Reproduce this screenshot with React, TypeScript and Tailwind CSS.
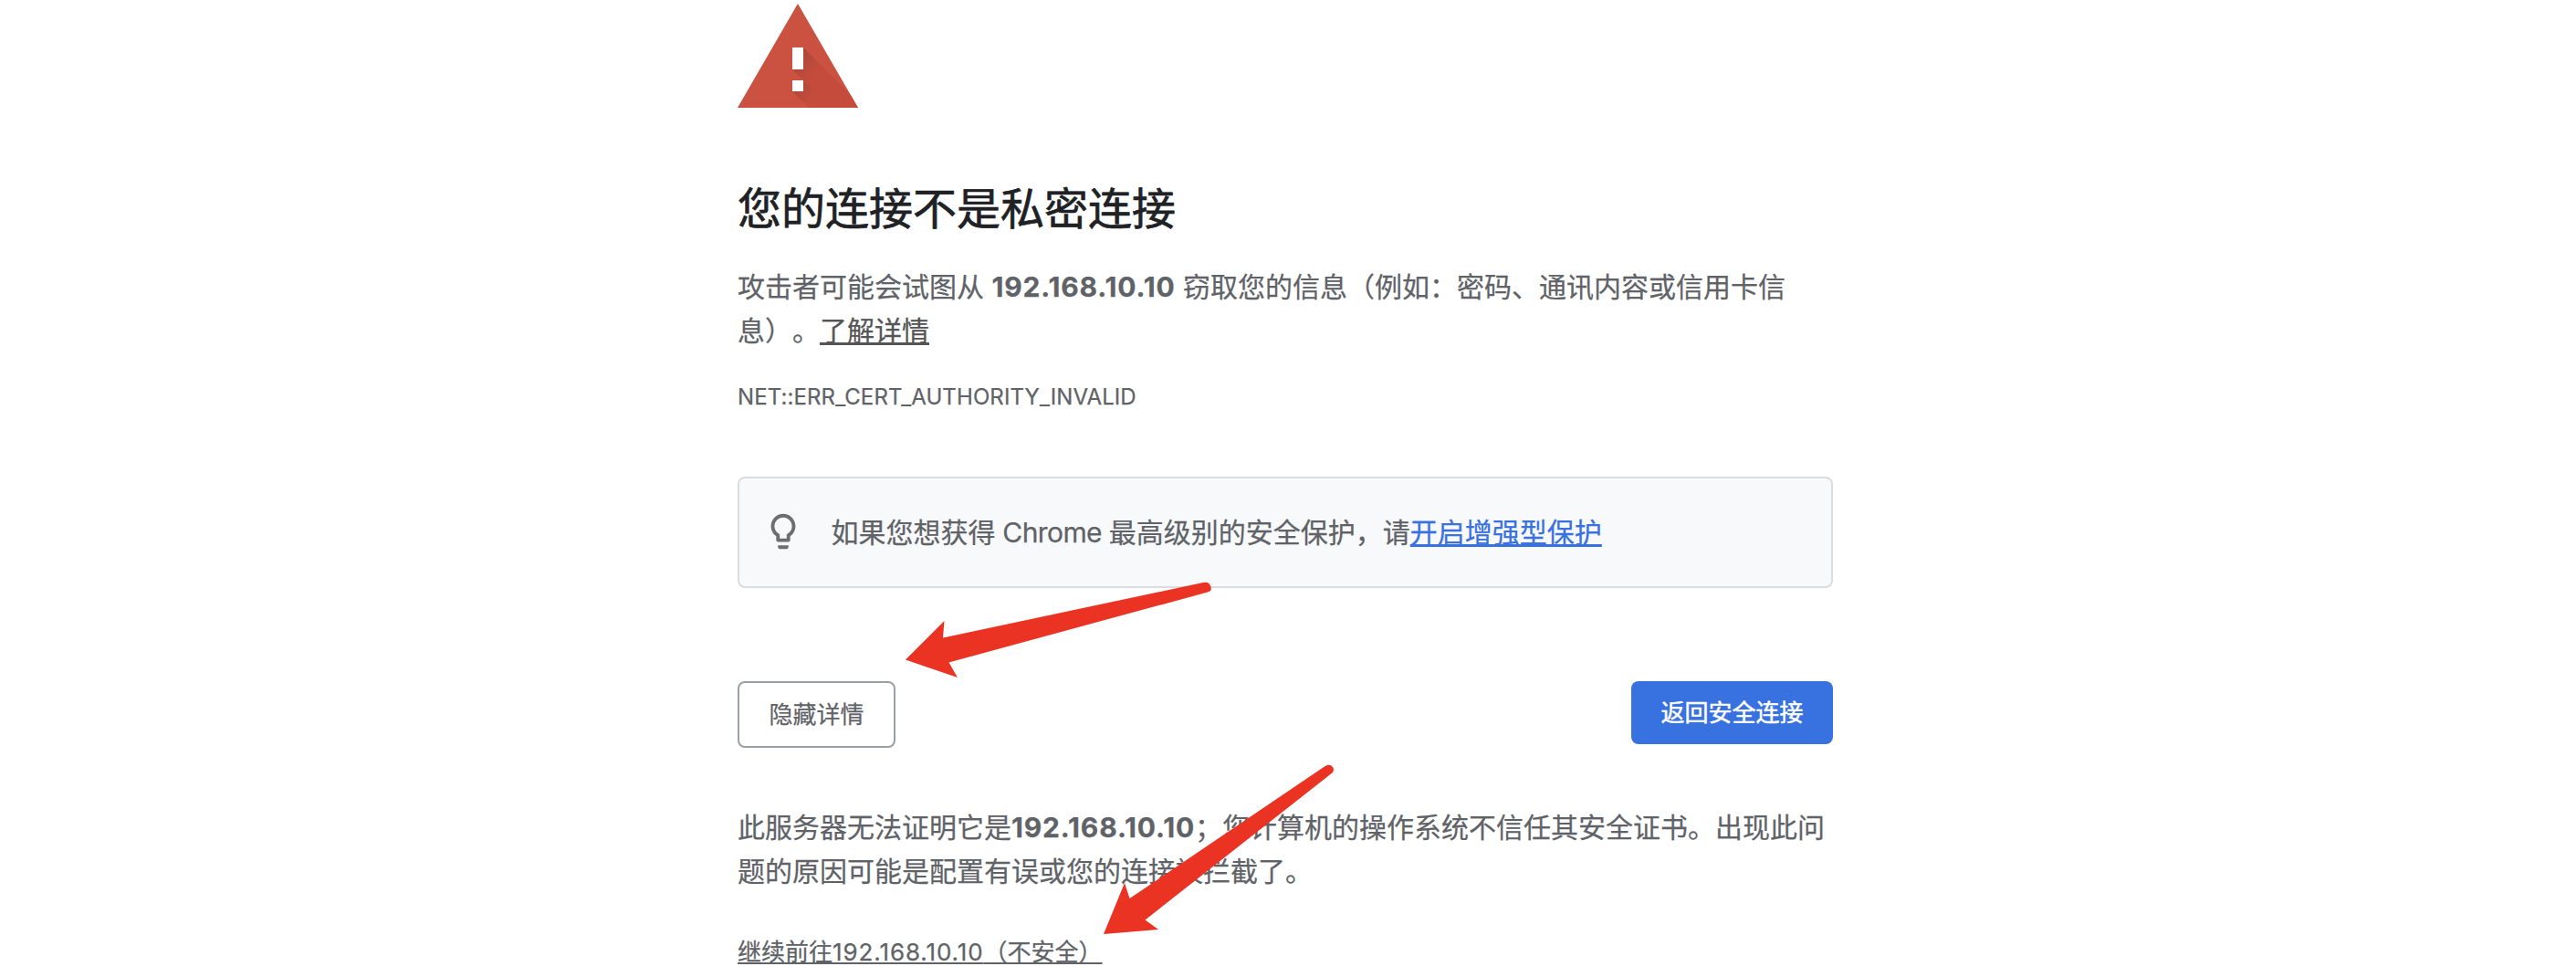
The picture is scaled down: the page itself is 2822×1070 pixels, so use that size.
export default function App() {
  return (
    <div className="relative min-h-[1070px] w-[2822px] overflow-hidden bg-white font-['Inter','Noto_Sans_CJK_SC',sans-serif] text-[30px] leading-[48px] text-[#5f6368] [-webkit-text-stroke:0.25px] [text-decoration-skip-ink:none] [text-spacing-trim:space-all]">
      <main className="ml-[808px] flex w-[1200px] flex-col items-start">
        <svg className="mt-1 h-[114px] w-[132px]" viewBox="0 0 132 114">
          <defs>
            <linearGradient id="barShade" gradientUnits="userSpaceOnUse" x1="62" y1="62" x2="81" y2="81">
              <stop offset="0" stopColor="#ac483a" />
              <stop offset="1" stopColor="#c54c3c" />
            </linearGradient>
            <linearGradient id="dotShade" gradientUnits="userSpaceOnUse" x1="76" y1="76" x2="93" y2="93">
              <stop offset="0" stopColor="#ac483a" />
              <stop offset="1" stopColor="#c54c3c" />
            </linearGradient>
            <clipPath id="tri"><path d="M66 0 132 114H0Z" /></clipPath>
          </defs>
          <path d="M66 0 132 114H0Z" fill="#cb5140" />
          <g clipPath="url(#tri)">
            <path d="M72 48 152 128H116L60 72Z" fill="url(#barShade)" />
            <path d="M72 84 116 128H92L60 96Z" fill="url(#dotShade)" />
          </g>
          <path d="M60 48h12v24H60zM60 84h12v12H60z" fill="#fff" />
        </svg>
        <h1 className="mt-[82px] text-[48px] leading-[58px] text-[#202124] [-webkit-text-stroke:0.7px]">您的连接不是私密连接</h1>
        <p className="mt-[32px] w-[1200px] whitespace-nowrap">
          攻击者可能会试图从 <strong className="font-bold tracking-[0.85px]">192.168.10.10</strong> 窃取您的信息（例如：密码、通讯内容或信用卡信<br />息）。<a className="text-[#555] underline decoration-[3px] underline-offset-[2px]">了解详情</a>
        </p>
        <div className="mt-[31px] text-[24px] leading-[36px] tracking-[0.1px]">NET::ERR_CERT_AUTHORITY_INVALID</div>
        <div className="mt-[69px] flex h-[122px] w-[1200px] items-center rounded-lg border-2 border-[#dadce0] bg-[#f8f9fb]">
          <svg className="mb-[3px] ml-[24.5px] h-[46px] w-[46px] shrink-0" viewBox="0 0 24 24" fill="#6e6e6e">
            <path d="M9 21c0 .55.45 1 1 1h4c.55 0 1-.45 1-1v-1H9v1zm3-19C8.14 2 5 5.14 5 9c0 2.38 1.19 4.47 3 5.74V17c0 .55.45 1 1 1h6c.55 0 1-.45 1-1v-2.26c1.81-1.27 3-3.36 3-5.74 0-3.86-3.14-7-7-7zm2.85 11.1-.85.6V16h-4v-2.3l-.85-.6C7.8 12.16 7 10.63 7 9c0-2.76 2.24-5 5-5s5 2.24 5 5c0 1.63-.8 3.16-2.15 4.1z" />
          </svg>
          <p className="ml-[30px]">如果您想获得<span className="tracking-[-0.6px]"> Chrome </span>最高级别的安全保护，请<a className="text-[#3871e0] underline decoration-[3px] underline-offset-[2px]">开启增强型保护</a></p>
        </div>
        <div className="mt-[102px] flex w-[1200px] items-start justify-between text-[26px]">
          <button className="flex h-[73px] w-[173px] items-center justify-center rounded-lg border-2 border-[#9aa0a6]">隐藏详情</button>
          <button className="flex h-[69px] w-[221px] items-center justify-center rounded-lg bg-[#3871e0] text-white [-webkit-text-stroke:0.5px]">返回安全连接</button>
        </div>
        <p className="mt-[63px] w-[1200px] whitespace-nowrap">
          此服务器无法证明它是<strong className="font-bold tracking-[0.85px]">192.168.10.10</strong>；您计算机的操作系统不信任其安全证书。出现此问<br />题的原因可能是配置有误或您的连接被拦截了。
        </p>
        <a className="mt-[45px] text-[26px] leading-[40px] underline decoration-2 underline-offset-[2px]">继续前往<span className="tracking-[0.9px]">192.168.10.10</span>（不安全）</a>
      </main>
      <svg className="pointer-events-none absolute left-0 top-0 h-[1070px] w-[2822px]" viewBox="0 0 2822 1070" fill="#eb3324">
        <path d="M992 722.500 1034.500 680 1033 698.500 1318 638Q1325 636.500 1326.500 643 1328 647 1323 648.500L1039.500 725.500 1049 742Z" />
        <path d="M1209 1023 1232 967 1237.500 984 1451 839.500Q1455 836.500 1458.500 838.500 1462.500 842 1460 846L1254.500 1007.500 1269 1018Z" />
      </svg>
    </div>
  );
}
